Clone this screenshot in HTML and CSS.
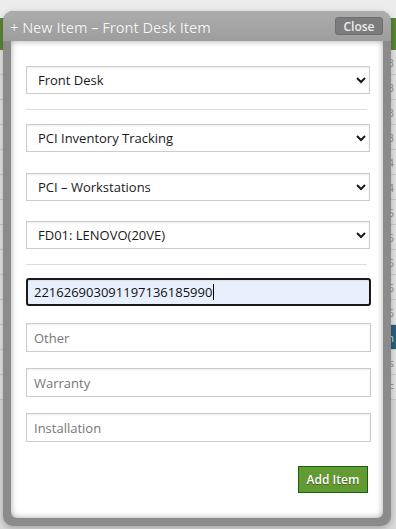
FILE: index.html
```html
<!DOCTYPE html>
<html lang="en">
<head>
    <meta charset="UTF-8">
    <meta name="viewport" content="width=device-width, initial-scale=1.0">
    <title>New Item</title>
    <link rel="stylesheet" href="styles.css">
</head>
<body>
    <div class="page">
        <div class="page-top"></div>
        <div class="page-bar"></div>
        <div class="page-rows">
            <div class="row"><span>3</span></div>
            <div class="row"><span>3</span></div>
            <div class="row"><span>3</span></div>
            <div class="row"><span>3</span></div>
            <div class="row"><span>4</span></div>
            <div class="row"><span>4</span></div>
            <div class="row"><span>5</span></div>
            <div class="row"><span>5</span></div>
            <div class="row"><span>6</span></div>
            <div class="row"><span>6</span></div>
            <div class="row"><span>6</span></div>
            <div class="row row-blue"><span>n</span></div>
            <div class="row"><span>s</span></div>
            <div class="row"><span>F</span></div>
        </div>
    </div>

    <div class="dialog">
        <div class="dialog-title">
            <span class="title-text">+ New Item &ndash; Front Desk Item</span>
            <button type="button" class="close-btn">Close</button>
        </div>
        <div class="dialog-body">
            <form class="item-form">
                <select class="field sel-1">
                    <option>Front Desk</option>
                </select>
                <hr class="divider">
                <select class="field sel-2">
                    <option>PCI Inventory Tracking</option>
                </select>
                <select class="field sel-3">
                    <option>PCI &ndash; Workstations</option>
                </select>
                <select class="field sel-4">
                    <option>FD01: LENOVO(20VE)</option>
                </select>
                <hr class="divider divider-2">
                <div class="field focus-field">
                    <span>221626903091197136185990</span><span class="caret"></span>
                </div>
                <input type="text" class="field text-field first-text" placeholder="Other">
                <input type="text" class="field text-field" placeholder="Warranty">
                <input type="text" class="field text-field" placeholder="Installation">
                <div class="form-actions">
                    <button type="button" class="add-btn">Add Item</button>
                </div>
            </form>
        </div>
    </div>
</body>
</html>
```

FILE: styles.css
```css
body {
    margin: 0;
    font-family: "Open Sans", "DejaVu Sans", sans-serif;
    background-color: #d9d9d9;
    overflow: hidden;
}

.page {
    height: 529px;
}

.page-top {
    height: 18px;
    background-color: #ececec;
}

.page-bar {
    height: 32px;
    background-color: #5b8532;
}

.page-rows {
    background-color: #e2e2e2;
}

.row {
    height: 24px;
    border-bottom: 1px solid #c9c9c9;
    display: flex;
    justify-content: flex-end;
    align-items: center;
    padding-right: 2px;
    font-size: 11px;
    color: #9a9080;
}

.row-blue {
    background: linear-gradient(to right, #e2e2e2 0, #e2e2e2 386px, #2d5d7c 386px);
    color: #cfe0ea;
}

.dialog {
    position: absolute;
    left: 3px;
    top: 11px;
    width: 388px;
    height: 515px;
    background-color: #8b8b8b;
    border-radius: 10px;
    box-shadow: 0 2px 6px rgba(0, 0, 0, 0.25);
    display: flex;
    flex-direction: column;
}

.dialog-title {
    height: 30px;
    display: flex;
    align-items: center;
    justify-content: space-between;
    padding: 0 8px 0 7px;
    background: linear-gradient(to bottom, #adadad, #9d9d9d);
    border-radius: 10px 10px 0 0;
}

.title-text {
    color: #f6f6f6;
    font-size: 14.6px;
    text-shadow: 0 0 1px rgba(0, 0, 0, 0.2);
    margin-top: 1px;
}

.close-btn {
    width: 48px;
    height: 18px;
    padding: 0;
    margin-top: -1px;
    border: 1px solid #6e6e6e;
    border-radius: 3px;
    background-color: #7c7c7c;
    color: #ececec;
    font-family: "Open Sans", sans-serif;
    font-size: 12px;
    font-weight: 600;
}

.dialog-body {
    flex: 1;
    margin: 0 8px 8px 8px;
    background-color: #ffffff;
    box-shadow: inset 0 0 6px rgba(0, 0, 0, 0.35);
    border-radius: 0 0 6px 6px;
    padding: 25px 12px 0 15px;
}

.item-form {
    display: flex;
    flex-direction: column;
}

.field {
    box-sizing: border-box;
    height: 28px;
    width: 344px;
    border: 1px solid #cccccc;
    box-shadow: inset 0 1px 2px rgba(0, 0, 0, 0.08);
    background-color: #ffffff;
    font-family: "Open Sans", sans-serif;
    font-size: 13px;
    color: #1a1a1a;
    margin: 0;
}

select.field {
    padding-left: 7px;
}

.divider {
    width: 341px;
    margin: 15px 0 14px 0;
    border: none;
    border-top: 1px solid #dddddd;
}

.divider-2 {
    margin: 15px 0 13px 0;
}

.sel-3 {
    margin-top: 21px;
}

.sel-4 {
    margin-top: 20px;
}

.focus-field {
    width: 345px;
    border: 2px solid #1a1a1a;
    border-radius: 3px;
    background-color: #e8f0fe;
    display: flex;
    align-items: center;
    padding-left: 6px;
    color: #111;
}

.caret {
    display: inline-block;
    width: 1px;
    height: 16px;
    background-color: #000;
    margin-left: 1px;
}

.text-field {
    width: 345px;
    height: 29px;
    padding-left: 7px;
    margin-top: 16px;
}

.text-field::placeholder {
    color: #777777;
}

.first-text {
    margin-top: 17px;
}

.form-actions {
    display: flex;
    justify-content: flex-end;
    padding-right: 3px;
    margin-top: 24px;
}

.add-btn {
    width: 70px;
    height: 27px;
    padding: 0;
    border: 1px solid #0f640f;
    background-color: #639a32;
    color: #ffffff;
    font-family: "Open Sans", sans-serif;
    font-size: 12px;
    font-weight: 600;
    text-shadow: 0 1px 1px rgba(0, 0, 0, 0.4);
}
```
